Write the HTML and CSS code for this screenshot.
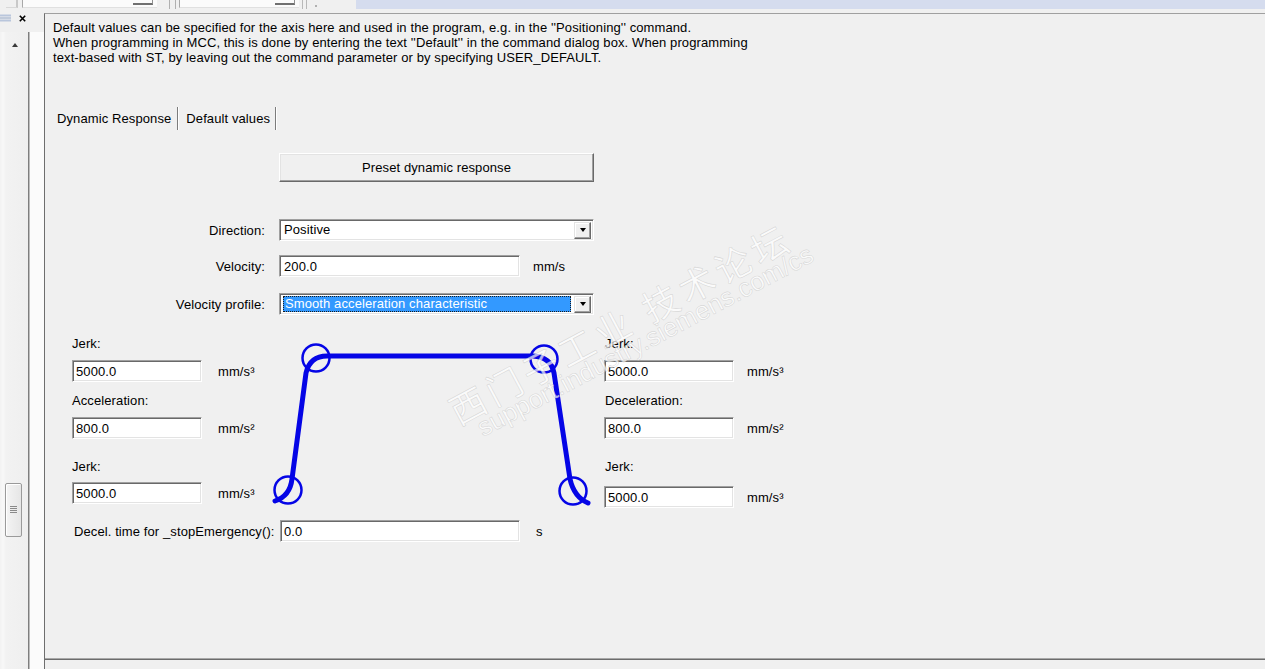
FILE: index.html
```html
<!DOCTYPE html>
<html>
<head>
<meta charset="utf-8">
<title>Default values</title>
<link rel="stylesheet" href="styles.css">
</head>
<body>
<div class="toolbar">
  <div class="tb-a"></div>
  <div class="tb-field tb-f1"><span class="tb-btn"></span></div>
  <div class="tb-grip"></div>
  <div class="tb-field tb-f2"><span class="tb-btn"></span></div>
  <div class="tb-grip2"></div>
  <div class="tb-dot"></div>
  <div class="tb-blue"></div>
</div>
<div class="workspace">
  <aside class="side">
    <div class="side-head">
      <svg class="ico-dock" width="12" height="8" viewBox="0 0 12 8"><rect x="0" y="0.5" width="11" height="2" fill="#b9c6dc"/><rect x="0" y="3.5" width="11" height="1" fill="#8fa3c4"/><rect x="0" y="5.5" width="11" height="2" fill="#b9c6dc"/></svg>
      <svg class="ico-close" width="7" height="7" viewBox="0 0 7 7"><path d="M0.8 0.8 L6.2 6.2 M6.2 0.8 L0.8 6.2" stroke="#000" stroke-width="1.6"/></svg>
    </div>
    <div class="side-body">
      <div class="scroll">
        <div class="arrow-up"></div>
        <div class="thumb">
          <svg width="7" height="8" viewBox="0 0 7 8"><path d="M0 0.5H7M0 2.5H7M0 4.5H7M0 6.5H7" stroke="#8a8a8a" stroke-width="1"/></svg>
        </div>
      </div>
      <div class="side-sep"></div>
    </div>
  </aside>
  <main class="main">
    <div class="main-body">
      <p class="desc">Default values can be specified for the axis here and used in the program, e.g. in the ''Positioning'' command.<br>When programming in MCC, this is done by entering the text ''Default'' in the command dialog box. When programming<br>text-based with ST, by leaving out the command parameter or by specifying USER_DEFAULT.</p>
      <div class="tabs">
        <span class="tab tab-active">Dynamic Response</span>
        <span class="tab-sep"></span>
        <span class="tab">Default values</span>
        <span class="tab-sep"></span>
      </div>
      <div class="panel">
        <div class="row row-btn">
          <span class="lbl"></span>
          <button class="btn">Preset dynamic response</button>
        </div>
        <div class="row row-dir">
          <span class="lbl">Direction:</span>
          <div class="sunk combo"><span class="combo-text">Positive</span><span class="drop"><i class="tri"></i></span></div>
        </div>
        <div class="row row-vel">
          <span class="lbl">Velocity:</span>
          <div class="sunk edit edit-wide">200.0</div>
          <span class="unit unit-vel">mm/s</span>
        </div>
        <div class="row row-prof">
          <span class="lbl">Velocity profile:</span>
          <div class="sunk combo"><span class="combo-sel">Smooth acceleration characteristic</span><span class="drop"><i class="tri"></i></span></div>
        </div>

        <div class="lower">
          <div class="col col-left">
            <div class="flabel fl1">Jerk:</div>
            <div class="frow fr1"><div class="sunk edit edit-sm">5000.0</div><span class="unit">mm/s³</span></div>
            <div class="flabel fl2">Acceleration:</div>
            <div class="frow fr2"><div class="sunk edit edit-sm">800.0</div><span class="unit">mm/s²</span></div>
            <div class="flabel fl3">Jerk:</div>
            <div class="frow fr3"><div class="sunk edit edit-sm">5000.0</div><span class="unit">mm/s³</span></div>
          </div>
          <svg class="profile" width="330" height="172" viewBox="0 0 330 172">
            <path d="M5 164 Q20 159 22 142 L36 36 Q40 19 57 19 L263 19 Q281 20 284 36 L300 142 Q304 160 318 166" fill="none" stroke="#0505e6" stroke-width="5" stroke-linecap="round" stroke-linejoin="round"/>
            <circle cx="46" cy="21" r="13.5" fill="none" stroke="#0505e6" stroke-width="2.5"/>
            <circle cx="274" cy="22" r="13.5" fill="none" stroke="#0505e6" stroke-width="2.5"/>
            <circle cx="18" cy="153" r="13.5" fill="none" stroke="#0505e6" stroke-width="2.5"/>
            <circle cx="303" cy="154" r="13.5" fill="none" stroke="#0505e6" stroke-width="2.5"/>
          </svg>
          <div class="col col-right">
            <div class="flabel fl1">Jerk:</div>
            <div class="frow fr1"><div class="sunk edit edit-sm">5000.0</div><span class="unit">mm/s³</span></div>
            <div class="flabel fl2">Deceleration:</div>
            <div class="frow fr2"><div class="sunk edit edit-sm">800.0</div><span class="unit">mm/s²</span></div>
            <div class="flabel fl3">Jerk:</div>
            <div class="frow fr3 fr3r"><div class="sunk edit edit-sm">5000.0</div><span class="unit">mm/s³</span></div>
          </div>
        </div>

        <div class="row row-decel">
          <span class="lbl-decel">Decel. time for _stopEmergency():</span>
          <div class="sunk edit edit-decel">0.0</div>
          <span class="unit unit-s">s</span>
        </div>
      </div>
      <div class="watermark wm1">西门子工业 技术论坛</div>
      <div class="watermark wm2">support.industry.siemens.com/cs</div>
    </div>
    <div class="main-foot"></div>
  </main>
</div>
</body>
</html>
```

FILE: styles.css
```css
* { box-sizing: border-box; }
html, body { margin: 0; padding: 0; }
body {
  width: 1265px;
  height: 669px;
  overflow: hidden;
  background: #f0f0f0;
  color: #000;
  font: 13px "Liberation Sans", Arial, sans-serif;
  letter-spacing: 0.1px;
}

/* top toolbar remnant */
.toolbar {
  height: 13px;
  display: flex;
  align-items: flex-start;
  background: #f0f0f0;
}
.tb-a {
  width: 12px;
  height: 8px;
  margin-left: 6px;
  border-right: 2px solid #c8c8c8;
  border-bottom: 1px solid #d8d8d8;
}
.tb-field {
  height: 8px;
  background: #fbfbfb;
  border-left: 1px solid #a8a8a8;
  border-bottom: 1px solid #e0e0e0;
  display: flex;
  justify-content: flex-end;
}
.tb-f1 { width: 135px; margin-left: 4px; }
.tb-f2 { width: 120px; margin-left: 3px; }
.tb-btn {
  width: 20px;
  height: 5px;
  margin-right: 4px;
  border-bottom: 2px solid #707070;
  border-right: 1px solid #909090;
}
.tb-grip {
  width: 7px;
  height: 9px;
  margin-left: 12px;
  border-left: 1px solid #b0b0b0;
  border-right: 1px solid #b0b0b0;
}
.tb-grip2 {
  width: 5px;
  height: 9px;
  margin-left: 3px;
  border-left: 1px solid #b8b8b8;
  border-right: 1px solid #b8b8b8;
}
.tb-dot {
  width: 2px;
  height: 2px;
  margin: 5px 0 0 8px;
  background: #b0b0b0;
}
.tb-blue {
  flex: 1;
  height: 9px;
  margin-left: 39px;
  background: #d5dcee;
}

/* workspace */
.workspace {
  display: flex;
  height: 656px;
}
.side {
  width: 44px;
  display: flex;
  flex-direction: column;
}
.side-head {
  height: 19px;
  display: flex;
  align-items: flex-start;
  padding-top: 1px;
}
.ico-close { margin-left: 7px; margin-top: 1px; }
.side-body {
  flex: 1;
  display: flex;
}
.scroll {
  width: 28px;
  background: linear-gradient(to right, #f2f2f2 0, #f8f8f8 3px, #f2f2f2 6px, #efefef 100%);
  display: flex;
  flex-direction: column;
}
.arrow-up {
  width: 0;
  height: 0;
  margin: 11px 0 0 12px;
  border-left: 3.5px solid transparent;
  border-right: 3.5px solid transparent;
  border-bottom: 4px solid #3a3a3a;
}
.thumb {
  width: 17px;
  height: 54px;
  margin: 436px 0 0 5px;
  border: 1px solid #9a9a9a;
  border-radius: 2px;
  background: linear-gradient(to right, #f4f4f4, #e6e6e6);
  box-shadow: inset 1px 1px 0 #fff;
  display: flex;
  align-items: center;
  justify-content: center;
}
.side-sep {
  width: 16px;
  background: #fbfbfb;
  border-left: 1px solid #7e7e7e;
  box-shadow: inset 1px 0 0 #bdbdbd;
}

/* main panel */
.main {
  flex: 1;
  display: flex;
  flex-direction: column;
  border-left: 1px solid #6e6e6e;
  border-top: 1px solid #a0a0a0;
}
.main-body {
  flex: 1;
  position: relative;
  overflow: hidden;
}
.main-foot {
  height: 11px;
  border-top: 1px solid #a8a8a8;
  box-shadow: inset 0 1px 0 #6c6c6c;
  background: #f0f0f0;
}

.desc {
  margin: 0;
  padding: 6px 0 0 8px;
  line-height: 15px;
}

.tabs {
  margin-top: 41px;
  height: 25px;
  display: flex;
  align-items: flex-start;
  padding-left: 12px;
}
.tab {
  line-height: 25px;
  white-space: nowrap;
}
.tab-active { margin-right: 6px; }
.tab + .tab-sep + .tab { margin-left: 7px; margin-right: 5px; }
.tab-sep {
  width: 2px;
  height: 23px;
  margin-top: 1px;
  border-left: 1px solid #7c7c7c;
  border-right: 1px solid #ffffff;
}

.panel { margin-top: 22px; }
.row {
  display: flex;
  align-items: center;
}
.lbl {
  width: 220px;
  margin-right: 14px;
  text-align: right;
  white-space: nowrap;
}
.btn {
  width: 315px;
  height: 29px;
  padding: 0;
  font: inherit;
  letter-spacing: inherit;
  color: #000;
  background: #f0f0f0;
  border: 1px solid;
  border-color: #ffffff #696969 #696969 #ffffff;
  box-shadow: inset -1px -1px 0 #a0a0a0, inset 1px 1px 0 #e3e3e3;
}
.row-dir { margin-top: 37px; }
.row-vel { margin-top: 14px; }
.row-prof { margin-top: 16px; }

.sunk {
  background: #fff;
  border: 1px solid;
  border-color: #a0a0a0 #ffffff #ffffff #a0a0a0;
  box-shadow: inset 1px 1px 0 #696969, inset -1px -1px 0 #e3e3e3;
}
.combo {
  width: 315px;
  height: 22px;
  display: flex;
  align-items: center;
  padding: 2px;
}
.combo-text {
  flex: 1;
  padding-left: 2px;
  line-height: 16px;
}
.combo-sel {
  flex: 1;
  margin: 0 3px 0 1px;
  height: 16px;
  line-height: 15px;
  padding-left: 2px;
  color: #fff;
  background: #3399ff;
  outline: 1px dotted #1b1b1b;
  outline-offset: -1px;
}
.drop {
  width: 17px;
  height: 17px;
  background: #f0f0f0;
  border: 1px solid;
  border-color: #e3e3e3 #696969 #696969 #e3e3e3;
  box-shadow: inset -1px -1px 0 #a0a0a0, inset 1px 1px 0 #fff;
  display: flex;
  align-items: center;
  justify-content: center;
}
.tri {
  width: 0;
  height: 0;
  border-left: 3.5px solid transparent;
  border-right: 3.5px solid transparent;
  border-top: 4px solid #000;
}
.edit {
  height: 22px;
  line-height: 19px;
  padding: 1px 0 0 4px;
  white-space: nowrap;
}
.edit-wide { width: 241px; }
.edit-sm { width: 130px; padding-left: 3px; }
.edit-decel { width: 240px; padding-left: 3px; }
.unit { margin-left: 16px; white-space: nowrap; }
.unit-vel { margin-left: 13px; }

/* lower section: profile diagram */
.lower {
  margin-top: 22px;
  display: flex;
  align-items: flex-start;
}
.col { display: flex; flex-direction: column; }
.col-left { width: 198px; margin-left: 27px; }
.col-right { margin-left: 4px; }
.col-right .flabel { padding-left: 1px; }
.col-right .unit { margin-left: 13px; }
.flabel { line-height: 14px; white-space: nowrap; }
.frow { display: flex; align-items: center; }
.fr1, .fr2 { margin-top: 9px; }
.fr3 { margin-top: 8px; }
.fr3r { margin-top: 12px; }
.fl2 { margin-top: 12px; }
.fl3 { margin-top: 21px; }
.profile { display: block; flex: none; }

.row-decel { margin-top: 11px; padding-left: 29px; }
.lbl-decel { width: 206px; white-space: nowrap; }
.unit-s { margin-left: 16px; }

/* watermark overlay */
.watermark {
  position: absolute;
  white-space: nowrap;
  pointer-events: none;
  color: rgba(255, 255, 255, 0.7);
  -webkit-text-stroke: 0.6px rgba(170, 170, 170, 0.4);
  transform-origin: 0 50%;
  transform: rotate(-28deg);
  font-family: "Noto Sans CJK SC", "Liberation Sans", sans-serif;
  letter-spacing: 0;
}
.wm1 {
  left: 406px;
  top: 372px;
  font-size: 36px;
  letter-spacing: 5px;
}
.wm2 {
  left: 434px;
  top: 400px;
  font-size: 26px;
  font-family: "Liberation Sans", Arial, sans-serif;
}
```
